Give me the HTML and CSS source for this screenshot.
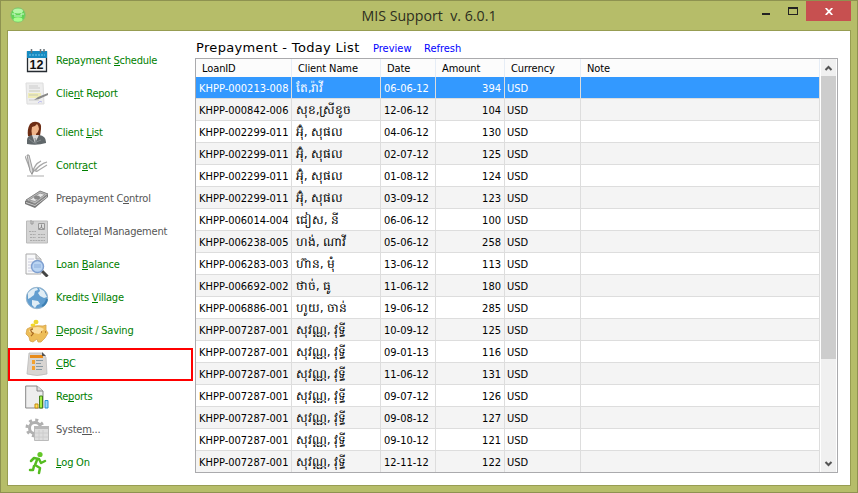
FILE: index.html
```html
<!DOCTYPE html>
<html lang="en">
<head>
<meta charset="utf-8">
<title>MIS Support v. 6.0.1</title>
<link rel="stylesheet" href="styles.css">
</head>
<body>
<div class="window">
  <header class="titlebar">
    <svg class="app-icon" width="16" height="16" viewBox="0 0 16 16"><circle cx="8" cy="8" r="7.3" fill="#5fd455" stroke="#8fc070"/><ellipse cx="8" cy="4" rx="5" ry="2.500" fill="#b5f7a8"/><ellipse cx="8" cy="12.500" rx="4.500" ry="2.200" fill="#a5ff8c"/><path d="M2 7h3v3M14 7h-3v3M6 9h4" fill="none" stroke="#d4fad0"/></svg>
    <h1 class="title">MIS Support&nbsp; v. 6.0.1</h1>
    <div class="controls">
      <span class="minimize"></span><span class="maximize"></span>
      <span class="close"><svg width="8" height="7" viewBox="0 0 8 7"><path d="M.7 0L7.3 7M7.3 0L.7 7" stroke="#fff" stroke-width="1.8"/></svg></span>
    </div>
  </header>
  <main class="client">
    <nav class="menu">
      <a class="item"><svg viewBox="0 0 24 24"><path d="M2.500 3h19v19.500h-19z" fill="#f5f5f5" stroke="#252b31" stroke-width="1.3"/><path d="M2 2h20v7H2z" fill="#168bc1"/><path d="M4 6h16" stroke="#75c8ef" stroke-dasharray="2 1"/><path d="M6.500 0v4M15.500 0v4M19 0v3" stroke="#69747b" stroke-width="1.500"/><text x="4.600" y="19.500" class="calendar-day">12</text></svg><span>Repayment <u>S</u>chedule</span></a>
      <a class="item"><svg viewBox="0 0 24 24"><path d="M1 1h17l1 21H2z" fill="#eee" stroke="#ddd"/><path d="M4 4h9M4 6h11M4 18h10" stroke="#ccc"/><path d="M3 11h13v5H3z" fill="#f0edb8"/><path d="M4 9h11M4 13h9" stroke="#c8c8b5"/><path d="M9 18l4-3 10-4v2l-9 4z" fill="#888"/><path d="M13 21q2-3 4-1" fill="none" stroke="#bcbcf1"/></svg><span>Clie<u>n</u>t Report</span></a>
      <a class="item after-gap"><svg viewBox="0 0 24 24"><path d="M3 15Q2 8 5 3Q8 0 12 1q5 1 4 7l-1 7-7 2z" fill="#6d2d14"/><path d="M7 6q3 0 5-3 2 2 2 5-1 4-3 5v3l-4-2q-1-4 0-8" fill="#efb58b"/><path d="M2 23v-4q0-4 5-5l4 4 3-4q7 1 7 7v1q-9 3-19 1" fill="#60676a"/><path d="M7 14l3 8 4-8" fill="#d8d8d8"/><path d="M10 17l1 6M4 18l5 4 7-3" stroke="#83898c" fill="none"/></svg><span>Client <u>L</u>ist</span></a>
      <a class="item"><svg viewBox="0 0 24 24"><path d="M0 2L7 20Q9 10 16 7 9 11 8 18 16 9 22 8 14 11 11 16q-1 3 3 0l8-5" fill="none" stroke="#a8a8a8" stroke-width="1.200"/><path d="M2 22h17" stroke="#c8c8c8" stroke-width="1.500"/><path d="M2 1h2l4 16-1 3-2-3z" fill="#ddd" stroke="#888" stroke-width=".8"/></svg><span>Contr<u>a</u>ct</span></a>
      <a class="item disabled"><svg viewBox="0 0 24 24"><path d="M0 14L15 4l8 3v3L10 21l-10-4z" fill="#777"/><path d="M1 13L15 4l8 3-13 10z" fill="#bbb" stroke="#888"/><path d="M4 13l11-7 5 1.500-10 7z" fill="#e5e5e5" stroke="#999"/><ellipse cx="12" cy="10.500" rx="3" ry="2" fill="#888"/><path d="M1 15.500l9 3 12-9" fill="none" stroke="#ccc"/></svg><span>Prepayment C<u>o</u>ntrol</span></a>
      <a class="item disabled"><svg viewBox="0 0 24 24"><path d="M1.500 1h21v22h-21z" fill="#d4d4d4" stroke="#bbb"/><path d="M13.500 3.500h6v6h-6z" fill="#ddd" stroke="#999"/><path d="M16.500 4.500v3M14 9q2-3 5 0" stroke="#888" fill="none"/><path d="M6 0v4h2V1" stroke="#999" fill="none"/><path d="M4 11.500h7M5 14.500h6M13 14.500h7M5 17.500h6M13 17.500h7M5 20.500h15" stroke="#aaa" stroke-dasharray="2 .7"/></svg><span>Collate<u>r</u>al Management</span></a>
      <a class="item"><svg viewBox="0 0 24 24"><path d="M1 1h10l5 5v15H1z" fill="#f8f9fa" stroke="#aaa"/><path d="M11 1v5h5" fill="#ddd" stroke="#aaa"/><path d="M3 6h6M3 9h5M3 12h3M3 15h3M3 18h6" stroke="#ccd"/><path d="M17 18l5.500 5.500" stroke="#444" stroke-width="3"/><circle cx="12.500" cy="13.500" r="6" fill="#b9d4f2" stroke="#7e9fd0" stroke-width="1.500"/><path d="M9 12h7M9 14h7" stroke="#8baddc"/></svg><span>Loan <u>B</u>alance</span></a>
      <a class="item"><svg viewBox="0 0 24 24"><circle cx="12" cy="12" r="10.700" fill="#629ed0" stroke="#9ab7ce"/><path d="M3 7q4-5 9-5l1 2-3 1-1 4-4 3-2 1zM14 2l5 3 3 6-3 1-4-2-2-3 2-2zM7 14l6 1 2 3-3 1-2 3-3-3z" fill="#e0edf5"/><path d="M17 20q4-2 5-7" stroke="#3d80b4" stroke-width="2" fill="none"/></svg><span>Kredits <u>V</u>illage</span></a>
      <a class="item"><svg viewBox="0 0 24 24"><path d="M2 10l4-2q6-2 12-1l3-1v5l2 3-3 5-4 4h-3l-1-3-4 3-3-1-1-4-3-3z" fill="#edbd58" stroke="#d5a34a" stroke-width=".8"/><path d="M5 10q8-4 14 0l-5 5-10-2" fill="#fbe0a0"/><path d="M8 10q-3 0-2 2t2 2-2 3M16 13h1M20 13h1" fill="none" stroke="#aa6b20" stroke-width="1.300"/><ellipse cx="11" cy="3" rx="2.500" ry="2.300" fill="#eed632"/><ellipse cx="8" cy="6" rx="2.500" ry="1.500" fill="#f3d829"/></svg><span><u>D</u>eposit / Saving</span></a>
      <a class="item"><svg viewBox="0 0 24 24"><path d="M4 1h13l4 4 1 17q-10 3-20 0z" fill="#d8d5d2" stroke="#bbb" stroke-width=".8"/><path d="M5 3h13v3H5z" fill="#e88b19"/><path d="M7 8h3v4H7zM7 14h3v4H7z" fill="#f2a231"/><path d="M11 8.500h7M11 11.500h5M11 14.500h7M11 17.500h6" stroke="#8999a1"/><path d="M17 0l4 4h-4z" fill="#555"/></svg><span><u>C</u>BC</span></a>
      <a class="item"><svg viewBox="0 0 24 24"><path d="M.7 1H12l6 5v17H.7z" fill="#eee" stroke="#888"/><path d="M12 1v5h6" fill="#ddd" stroke="#888"/><path d="M10 19h3v4h-3z" fill="#ffe356" stroke="#c58b13"/><path d="M14.500 11h3v12h-3z" fill="#a4ee45" stroke="#44801e"/><path d="M20 15.500h3V23h-3z" fill="#9cdaff" stroke="#2b91d1"/></svg><span>Re<u>p</u>orts</span></a>
      <a class="item disabled"><svg viewBox="0 0 24 24"><circle cx="10" cy="10" r="8" fill="none" stroke="#b0b0b0" stroke-width="3" stroke-dasharray="3 3.280"/><circle cx="10" cy="10" r="5.500" fill="#fff" stroke="#b0b0b0" stroke-width="3"/><path d="M9.500 8.500h14v14h-14z" fill="#ddd" stroke="#bbb"/><path d="M9 8h15v3H9z" fill="#b8b8b8"/><path d="M10 15h13M10 19h13M14 12v10M18 12v10" stroke="#ccc"/></svg><span>Syste<u>m</u>...</span></a>
      <a class="item"><svg viewBox="0 0 24 24"><circle cx="15" cy="3.500" r="2.600" fill="#64c728"/><path d="M6 10l3-3 5 1 2 4 4-2M12 9l-2 5 5 3-1 5M9 15l-1 4H5" fill="none" stroke="#54bc20" stroke-width="2.500" stroke-linejoin="round" stroke-linecap="round"/></svg><span><u>L</u>og On</span></a>
      <div class="highlight"></div>
    </nav>
    <section class="content">
      <div class="heading"><h2>Prepayment - Today List</h2><a class="preview">Preview</a><a class="refresh">Refresh</a></div>
      <div class="list">
        <div class="grid">
          <div class="row head"><span>LoanID</span><span>Client Name</span><span>Date</span><span>Amount</span><span>Currency</span><span>Note</span></div>
          <div class="row selected"><span>KHPP-000213-008</span><span>តែ,រ៉ាវី</span><span>06-06-12</span><span>394</span><span>USD</span><span></span></div>
          <div class="row"><span>KHPP-000842-006</span><span>សុខ,ស្រីខូច</span><span>12-06-12</span><span>104</span><span>USD</span><span></span></div>
          <div class="row"><span>KHPP-002299-011</span><span>អ៊ុំ, សុផល</span><span>04-06-12</span><span>130</span><span>USD</span><span></span></div>
          <div class="row"><span>KHPP-002299-011</span><span>អ៊ុំ, សុផល</span><span>02-07-12</span><span>125</span><span>USD</span><span></span></div>
          <div class="row"><span>KHPP-002299-011</span><span>អ៊ុំ, សុផល</span><span>01-08-12</span><span>124</span><span>USD</span><span></span></div>
          <div class="row"><span>KHPP-002299-011</span><span>អ៊ុំ, សុផល</span><span>03-09-12</span><span>123</span><span>USD</span><span></span></div>
          <div class="row"><span>KHPP-006014-004</span><span>ជៀស, នី</span><span>06-06-12</span><span>100</span><span>USD</span><span></span></div>
          <div class="row"><span>KHPP-006238-005</span><span>ហង់, ណាវី</span><span>05-06-12</span><span>258</span><span>USD</span><span></span></div>
          <div class="row"><span>KHPP-006283-003</span><span>ហ៊ាន, មុំ</span><span>13-06-12</span><span>113</span><span>USD</span><span></span></div>
          <div class="row"><span>KHPP-006692-002</span><span>ថាច់, ធូ</span><span>11-06-12</span><span>180</span><span>USD</span><span></span></div>
          <div class="row"><span>KHPP-006886-001</span><span>ហូយ, ចាន់</span><span>19-06-12</span><span>285</span><span>USD</span><span></span></div>
          <div class="row"><span>KHPP-007287-001</span><span>សុវណ្ណ, វុទ្ធី</span><span>10-09-12</span><span>125</span><span>USD</span><span></span></div>
          <div class="row"><span>KHPP-007287-001</span><span>សុវណ្ណ, វុទ្ធី</span><span>09-01-13</span><span>116</span><span>USD</span><span></span></div>
          <div class="row"><span>KHPP-007287-001</span><span>សុវណ្ណ, វុទ្ធី</span><span>11-06-12</span><span>131</span><span>USD</span><span></span></div>
          <div class="row"><span>KHPP-007287-001</span><span>សុវណ្ណ, វុទ្ធី</span><span>09-07-12</span><span>126</span><span>USD</span><span></span></div>
          <div class="row"><span>KHPP-007287-001</span><span>សុវណ្ណ, វុទ្ធី</span><span>09-08-12</span><span>127</span><span>USD</span><span></span></div>
          <div class="row"><span>KHPP-007287-001</span><span>សុវណ្ណ, វុទ្ធី</span><span>09-10-12</span><span>121</span><span>USD</span><span></span></div>
          <div class="row"><span>KHPP-007287-001</span><span>សុវណ្ណ, វុទ្ធី</span><span>12-11-12</span><span>122</span><span>USD</span><span></span></div>
        </div>
        <div class="scrollbar">
          <svg width="15" height="17" viewBox="0 0 15 17"><path d="M4.500 11L7.500 8l3 3" fill="none" stroke="#555" stroke-width="2"/></svg>
          <div class="thumb"></div>
          <svg class="down" width="15" height="17" viewBox="0 0 15 17"><path d="M4.500 7l3 3 3-3" fill="none" stroke="#555" stroke-width="2"/></svg>
        </div>
      </div>
    </section>
  </main>
</div>
</body>
</html>
```
FILE: styles.css
```css
* { box-sizing: border-box; }
body { margin: 0; font: 11px/13px "DejaVu Sans Condensed", "DejaVu Sans", sans-serif; font-stretch: condensed; color: #000; }
.window { width: 858px; height: 493px; background: #b6bd69; border: 1px solid #8e9250; padding: 0 6px 6px; display: flex; flex-direction: column; }
.titlebar { height: 29px; display: flex; flex: none; position: relative; justify-content: center; }
.app-icon { position: absolute; left: 3px; top: 6px; }
.title { margin: 6px 0 0; font: 14.2px/17px "Open Sans", sans-serif; color: #2d2e20; }
.controls { position: absolute; right: 0; top: 0; display: flex; height: 20px; }
.minimize { width: 8px; height: 2px; background: #222; margin: 12px 18px 0 0; }
.maximize { width: 10px; height: 8px; border: 1px solid #222; border-top-width: 2px; margin: 6px 8px 0 0; }
.close { width: 45px; background: #c75050; display: flex; align-items: center; justify-content: center; }
.client { flex: 1; min-height: 0; border: 1px solid #979d52; background: #fff; display: flex; }
.menu { width: 187px; padding: 13px 0 0 17px; position: relative; flex: none; }
.item { height: 33px; display: flex; align-items: center; gap: 7px; color: #008000; white-space: nowrap; }
.item span { letter-spacing: -.22px; }
.item u { text-decoration: none; border-bottom: 1px solid; display: inline-block; height: 12px; line-height: 13px; }
.item svg { width: 24px; height: 24px; flex: none; }
.item.after-gap { margin-top: 6px; }
.disabled { color: #565656; }
.calendar-day { font: bold 12.500px "Liberation Sans", sans-serif; fill: #111; }
.highlight { position: absolute; left: 0; top: 317px; width: 185px; height: 33px; border: 2px solid #f00; }
.content { width: 643px; }
.heading { height: 27px; display: flex; padding-top: 8px; }
.heading h2 { width: 178px; margin: 0; padding-left: 1px; font: 13px/17px "DejaVu Sans", sans-serif; letter-spacing: .33px; white-space: nowrap; }
.heading a { color: #00f; line-height: 19px; }
.preview { width: 51px; }
.list { width: 643px; height: 415px; border: 1px solid #aaaaad; display: flex; overflow: hidden; background: #fff; }
.grid { width: 624px; flex: none; }
.row { height: 22px; display: grid; grid-template-columns: 96px 89px 55px 69px 76px 239px; }
.row > span { border-right: 1px solid #ddd; border-bottom: 1px solid #ddd; padding: 5px 3px 0; white-space: nowrap; }
.row:nth-child(odd) { background: #f4f4f4; }
.row.head { height: 18px; background: #fcfcfc; }
.head > span { padding: 3px 6px 0; border-color: #e6edf6; border-bottom: 0; letter-spacing: -.1px; }
.row:not(.head) > span:nth-child(4) { text-align: right; }
.row:not(.head) > span:nth-child(2) { padding-left: 4px; font-size: 12.2px; }
.row:not(.head) > span:nth-child(5) { padding-left: 2px; }
.row.selected { background: #3399ff; color: #fff; }
.scrollbar { width: 15px; margin-left: 1px; background: #f0f0f0; display: flex; flex-direction: column; }
.scrollbar svg { flex: none; }
.thumb { height: 283px; background: #cdcdcd; }
.down { margin-top: auto; }
```
